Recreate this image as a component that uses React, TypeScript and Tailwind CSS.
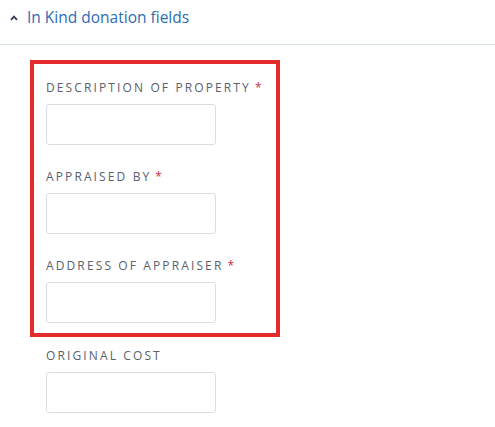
import React from "react";

type Field = {
	label: string;
	required?: boolean;
};

const fields: Field[] = [
	{ label: "Description of property", required: true },
	{ label: "Appraised by", required: true },
	{ label: "Address of appraiser", required: true },
];

function FormField({ label, required }: Field) {
	return (
		<div className="flex flex-col">
			<label className="text-[12px] leading-[16px] font-medium uppercase tracking-[2.12px] text-[#59616c]">
				{label}
				{required && <span className="ml-[4px] text-[#d2294b]">*</span>}
			</label>
			<input
				type="text"
				className="mt-[8px] h-[41px] w-[170px] rounded-[3px] border border-[#dcdde3] bg-white px-2 focus:outline-none"
			/>
		</div>
	);
}

export default function App() {
	return (
		<div className="h-[427px] w-[495px] bg-white font-['Open_Sans',sans-serif]">
			<button className="flex h-[45px] w-full items-center border-b border-[#d5e1e6] pb-[9px] pl-[10px]">
				<svg width="8" height="6" viewBox="0 0 8 6" fill="none" stroke="#34404f" strokeWidth="1.8">
					<path d="M1 4.8L4 1.6L7 4.8" />
				</svg>
				<span className="ml-[9px] text-[15.5px] text-[#2d6db5]">In Kind donation fields</span>
			</button>
			<div className="pl-[30px] pt-[15px]">
				<div className="flex w-[250px] flex-col gap-[24px] border-4 border-[#e32b2b] pb-[10px] pl-[12px] pt-[16px]">
					{fields.map((f) => (
						<FormField key={f.label} {...f} />
					))}
				</div>
				<div className="pl-[16px] pt-[11px]">
					<FormField label="Original cost" />
				</div>
			</div>
		</div>
	);
}
